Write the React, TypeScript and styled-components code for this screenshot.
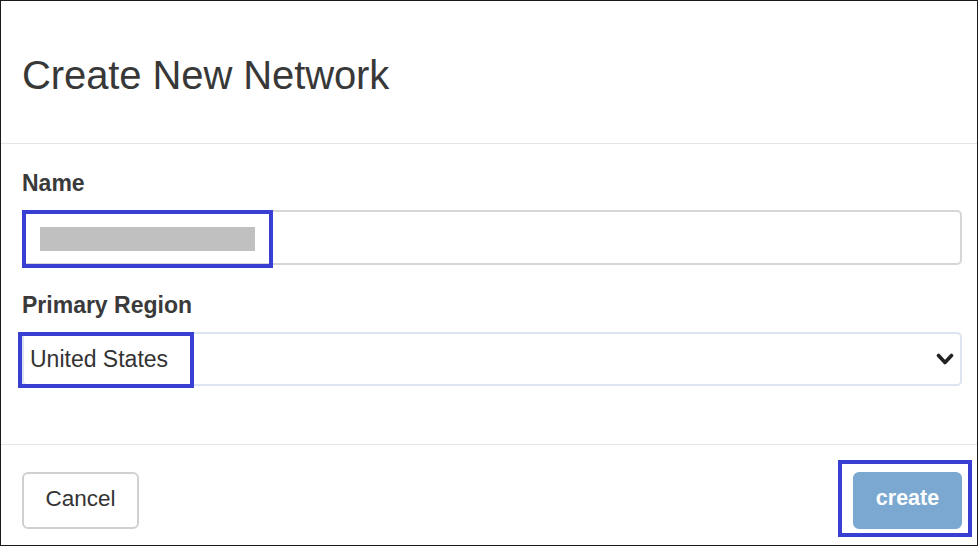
import styled, { createGlobalStyle } from "styled-components";

const GlobalStyle = createGlobalStyle`
  html, body {
    margin: 0;
    padding: 0;
    background: #ffffff;
  }
  body {
    font-family: "Liberation Sans", Arial, Helvetica, sans-serif;
    color: #333333;
  }
`;

const Frame = styled.div`
  box-sizing: border-box;
  width: 978px;
  height: 546px;
  border: 1px solid #1a1a1a;
  background: #ffffff;
  display: flex;
  flex-direction: column;
`;

const Header = styled.div`
  height: 142px;
  display: flex;
  align-items: center;
  padding-left: 21px;
  border-bottom: 1px solid #e5e5e5;
  h1 {
    margin: 0;
    margin-top: 6px;
    font-size: 40px;
    font-weight: 400;
    color: #383838;
    letter-spacing: -0.1px;
  }
`;

const Body = styled.div`
  padding: 26px 15px 0 21px;
  height: 301px;
  box-sizing: border-box;
  border-bottom: 1px solid #e5e5e5;
`;

const Label = styled.div`
  font-size: 23px;
  font-weight: 700;
  line-height: 26px;
  color: #3a3a3a;
  margin-bottom: 14px;
`;

const Field = styled.div<{ $border: string }>`
  position: relative;
  box-sizing: border-box;
  height: ${(p) => (p.$border === "select" ? "54px" : "55px")};
  border: 2px solid ${(p) => (p.$border === "select" ? "#dce5ef" : "#d6d6d6")};
  border-radius: 5px;
  display: flex;
  align-items: center;
  padding: 0 8px 0 ${(p) => (p.$border === "select" ? "6px" : "8px")};
  font-size: 23px;
  color: #333333;
  margin-bottom: ${(p) => (p.$border === "select" ? "0" : "27px")};
`;

const Redacted = styled.span`
  display: block;
  width: 215px;
  height: 24px;
  margin-left: 8px;
  margin-top: 2px;
  background: #c0c0c0;
`;

const Chevron = styled.svg`
  margin-left: auto;
  margin-right: -2px;
`;

const Highlight = styled.div<{ $l: number; $t: number; $w: number; $h: number }>`
  position: absolute;
  left: ${(p) => p.$l}px;
  top: ${(p) => p.$t}px;
  width: ${(p) => p.$w}px;
  height: ${(p) => p.$h}px;
  box-sizing: border-box;
  border: 4px solid #3a3fd4;
  pointer-events: none;
`;

const Footer = styled.div`
  flex: 1;
  display: flex;
  align-items: center;
  justify-content: space-between;
  padding: 0 15px 0 21px;
`;

const Button = styled.button<{ $primary?: boolean }>`
  position: relative;
  box-sizing: border-box;
  height: 57px;
  border-radius: 6px;
  font-family: "Liberation Sans", Arial, sans-serif;
  font-size: ${(p) => (p.$primary ? "21.5px" : "22.5px")};
  font-weight: ${(p) => (p.$primary ? 700 : 400)};
  color: ${(p) => (p.$primary ? "#ffffff" : "#333333")};
  background: ${(p) => (p.$primary ? "#7aa8d0" : "#ffffff")};
  border: 2px solid ${(p) => (p.$primary ? "#7aa8d0" : "#d0d0d0")};
  width: ${(p) => (p.$primary ? "109px" : "117px")};
  padding: 0 0 4px;
`;

const ButtonWrap = styled.div`
  position: relative;
  display: flex;
  margin-top: 11px;
`;

export default function App() {
  return (
    <>
      <GlobalStyle />
      <Frame>
        <Header>
          <h1>Create New Network</h1>
        </Header>
        <Body>
          <Label>Name</Label>
          <Field $border="input">
            <Redacted />
            <Highlight $l={-2} $t={-2} $w={251} $h={58} />
          </Field>
          <Label>Primary Region</Label>
          <Field $border="select">
            <span>United States</span>
            <Chevron width="18" height="13" viewBox="0 0 18 13">
              <polyline
                points="2.5,2.5 9,9.5 15.5,2.5"
                fill="none"
                stroke="#222222"
                strokeWidth="3.6"
                strokeLinecap="round"
                strokeLinejoin="round"
              />
            </Chevron>
            <Highlight $l={-6} $t={-2} $w={176} $h={56} />
          </Field>
        </Body>
        <Footer>
          <ButtonWrap>
            <Button>Cancel</Button>
          </ButtonWrap>
          <ButtonWrap>
            <Button $primary>create</Button>
            <Highlight $l={-15} $t={-12} $w={134} $h={77} />
          </ButtonWrap>
        </Footer>
      </Frame>
    </>
  );
}
